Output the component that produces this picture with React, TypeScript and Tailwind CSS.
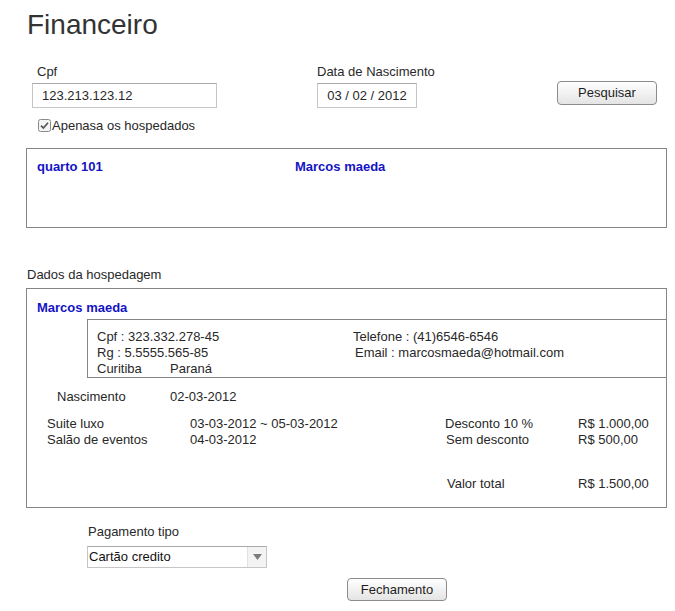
import React from 'react';

const FONT = { fontFamily: '"Liberation Sans", Arial, sans-serif' };

function Button({ label }: { label: string }) {
  return (
    <div className="flex h-full w-full items-center justify-center rounded-[4px] border border-[#8c8c8c] bg-gradient-to-b from-[#ffffff] to-[#e4e4e4] text-[13px] leading-[16px] text-[#1e1e1e]">
      {label}
    </div>
  );
}

function Checkbox() {
  return (
    <svg width="13" height="13" viewBox="0 0 13 13" className="shrink-0">
      <rect x="0.5" y="0.5" width="12" height="12" rx="2" fill="#f4f4f4" stroke="#8a8a8a" />
      <path d="M3 6.6 L5.4 9 L10 3.8" fill="none" stroke="#555" strokeWidth="1.7" />
    </svg>
  );
}

export default function App() {
  return (
    <div className="relative h-[611px] w-[675px] overflow-hidden bg-white text-[#282828]" style={FONT}>
      {/* Title */}
      <div className="pl-[27px] pt-[9px] text-[28px] leading-[32px] text-[#333]">Financeiro</div>

      {/* Search fields */}
      <div className="mt-[22.5px] flex text-[13px] leading-[16px]">
        <div className="ml-[32px] w-[185px]">
          <div className="pl-[5px]">Cpf</div>
          <div className="mt-[3.5px] flex h-[25px] items-center border border-[#c6c6c6] border-t-[#a9a9a9] pl-[9px]">
            123.213.123.12
          </div>
        </div>
        <div className="ml-[100px] w-[100px]">
          <div className="whitespace-nowrap">Data de Nascimento</div>
          <div className="mt-[3.5px] flex h-[25px] items-center justify-center border border-[#c6c6c6] border-t-[#a9a9a9]">
            03 / 02 / 2012
          </div>
        </div>
        <div className="ml-[140px] pt-[17.5px]">
          <div className="h-[24px] w-[100px]">
            <Button label="Pesquisar" />
          </div>
        </div>
      </div>

      <div className="ml-[38px] mt-[9.5px] flex items-center text-[13px] leading-[16px]">
        <Checkbox />
        <span className="ml-[1px]">Apenasa os hospedados</span>
      </div>

      {/* Rooms list */}
      <div className="ml-[26px] mt-[14.5px] h-[80px] w-[641px] border border-[#858585] pl-[10px] pt-[10px] text-[13px] font-bold leading-[16px] text-[#1414c4]">
        <div className="flex">
          <div className="w-[258px]">quarto 101</div>
          <div>Marcos maeda</div>
        </div>
      </div>

      {/* Stay details */}
      <div className="mt-[39px] pl-[27px] text-[13px] leading-[16px]">Dados da hospedagem</div>
      <div className="ml-[26px] mt-[5px] h-[220px] w-[641px] border border-[#858585] text-[13px] leading-[16px]">
        <div className="pl-[10px] pt-[10.5px] font-bold text-[#1414c4]">Marcos maeda</div>
        <div className="ml-[60px] mt-[3.5px] flex border-b border-l border-t border-[#858585] pb-[0.5px] pt-[8.5px]">
          <div className="w-[265px] pl-[9px]">
            <div>Cpf : 323.332.278-45</div>
            <div>Rg : 5.5555.565-85</div>
            <div className="flex">
              <span className="w-[73px]">Curitiba</span>
              <span>Paraná</span>
            </div>
          </div>
          <div>
            <div>Telefone : (41)6546-6546</div>
            <div className="pl-[2px]">Email : marcosmaeda@hotmail.com</div>
          </div>
        </div>

        <div className="mt-[11px] flex pl-[30px]">
          <span className="w-[113px]">Nascimento</span>
          <span>02-03-2012</span>
        </div>

        <div className="mt-[10.5px] pl-[20px]">
          <div className="flex">
            <span className="w-[143px]">Suite luxo</span>
            <span className="w-[255px]">03-03-2012 ~ 05-03-2012</span>
            <span className="w-[133px]">Desconto 10 %</span>
            <span>R$ 1.000,00</span>
          </div>
          <div className="flex">
            <span className="w-[143px]">Salão de eventos</span>
            <span className="w-[255px]">04-03-2012</span>
            <span className="w-[133px] pl-[1px]">Sem desconto</span>
            <span>R$ 500,00</span>
          </div>
          <div className="mt-[28px] flex">
            <span className="w-[398px]" />
            <span className="w-[133px] pl-[2px]">Valor total</span>
            <span>R$ 1.500,00</span>
          </div>
        </div>
      </div>

      {/* Payment */}
      <div className="mt-[16px] pl-[88px] text-[13px] leading-[16px]">Pagamento tipo</div>
      <div className="ml-[87px] mt-[6px] flex h-[22px] w-[180px] items-center border border-[#c6c6c6] border-t-[#a9a9a9] text-[13px] leading-[16px]">
        <span className="flex-1 pl-[1px] text-[#111]">Cartão credito</span>
        <div className="flex h-full w-[19px] items-center justify-center border-l border-[#e2e2e2] bg-[#f3f3f3]">
          <svg width="9" height="6" viewBox="0 0 9 6">
            <path d="M0 0 H9 L4.5 6 Z" fill="#7c7c7c" />
          </svg>
        </div>
      </div>

      <div className="ml-[347px] mt-[10px] h-[23px] w-[100px]">
        <Button label="Fechamento" />
      </div>
    </div>
  );
}
